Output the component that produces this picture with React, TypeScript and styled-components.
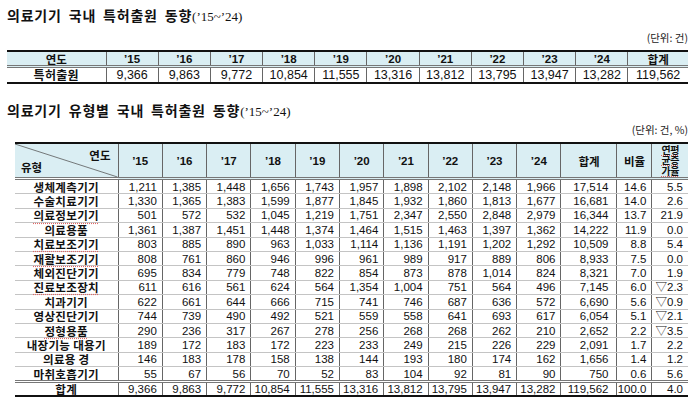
import React from 'react';
import styled, { createGlobalStyle } from 'styled-components';

const GlobalStyle = createGlobalStyle`
  html, body {
    margin: 0;
    padding: 0;
    background: #ffffff;
  }
`;

const headBg = '#daeef3';
const kfont = `"Noto Sans CJK KR", "Noto Sans", sans-serif`;
const nfont = `"Liberation Sans", "Noto Sans CJK KR", sans-serif`;

const Page = styled.div`
  width: 700px;
  height: 402px;
  overflow: hidden;
  box-sizing: border-box;
  padding: 0 12px 0 7px;
  font-family: ${kfont};
  color: #111;
`;

const Title = styled.h2<{ $top: number }>`
  margin: ${p => p.$top}px 0 0 0;
  font-size: 14px;
  line-height: 20px;
  font-weight: 700;
  letter-spacing: 0.8px;
  word-spacing: 3px;
  white-space: nowrap;
`;

const Years = styled.span`
  font-family: "Liberation Serif", "Noto Sans CJK KR", serif;
  font-size: 13px;
  font-weight: 400;
  letter-spacing: 0;
`;

const Unit = styled.div<{ $top: number }>`
  margin-top: ${p => p.$top}px;
  text-align: right;
  font-size: 10.5px;
  line-height: 14px;
  color: #222;
`;

const Table = styled.table<{ $width: number; $left: number }>`
  width: ${p => p.$width}px;
  margin: 5px 0 0 ${p => p.$left}px;
  border-collapse: collapse;
  table-layout: fixed;
  border-top: 2px solid #111;
  border-bottom: 2px solid #111;
`;

const Th = styled.th<{ $h: number }>`
  height: ${p => p.$h}px;
  padding: 0;
  background: ${headBg};
  font-family: ${nfont};
  font-size: 11.5px;
  line-height: 12px;
  font-weight: 700;
  text-align: center;
  border-left: 1px solid #666;
  border-bottom: 3px double #777;
  &:first-child {
    border-left: none;
  }
`;

const HanTh = styled(Th)`
  font-family: ${kfont};
`;

const Td = styled.td<{ $h: number; $align?: string; $pad?: number; $size?: number }>`
  height: ${p => p.$h}px;
  padding: 0 ${p => p.$pad ?? 0}px 0 0;
  font-family: ${nfont};
  font-size: ${p => p.$size ?? 11.5}px;
  line-height: 12px;
  text-align: ${p => p.$align ?? 'right'};
  border-left: 1px solid #666;
  border-bottom: 1px solid #c4c4c4;
  white-space: nowrap;
  overflow: hidden;
`;

const Label = styled.td<{ $h: number; $size?: number }>`
  height: ${p => p.$h}px;
  padding: 0;
  font-size: ${p => p.$size ?? 11.5}px;
  line-height: 12px;
  font-weight: 700;
  text-align: center;
  letter-spacing: 0.3px;
  border-bottom: 1px solid #c4c4c4;
  white-space: nowrap;
`;

const TotalRow = styled.tr`
  td {
    border-top: 3px double #777;
    border-bottom: none;
  }
`;

const Squiggle = styled.span`
  text-decoration: underline dotted #e06666;
  text-underline-offset: 2px;
`;

const DiagCell = styled.th`
  position: relative;
  height: 33px;
  padding: 0;
  background: ${headBg};
  border-bottom: 3px double #777;
  font-size: 11.5px;
  font-weight: 700;
`;

const DiagLine = styled.svg`
  position: absolute;
  inset: 0;
  width: 100%;
  height: 100%;
`;

const CornerTop = styled.span`
  position: absolute;
  right: 7px;
  top: 4px;
  line-height: 14px;
`;

const CornerBottom = styled.span`
  position: absolute;
  left: 6px;
  bottom: 3px;
  line-height: 14px;
`;

const Stacked = styled.span`
  display: block;
  font-size: 10px;
  line-height: 10.5px;
  letter-spacing: -0.5px;
  text-decoration: underline dotted #e06666;
`;

const summaryYears = ['’15', '’16', '’17', '’18', '’19', '’20', '’21', '’22', '’23', '’24'];
const summaryValues = ['9,366', '9,863', '9,772', '10,854', '11,555', '13,316', '13,812', '13,795', '13,947', '13,282', '119,562'];

type Row = { name: string; squiggle?: boolean; values: string[] };

const rows: Row[] = [
  { name: '생체계측기기', values: ['1,211', '1,385', '1,448', '1,656', '1,743', '1,957', '1,898', '2,102', '2,148', '1,966', '17,514', '14.6', '5.5'] },
  { name: '수술치료기기', values: ['1,330', '1,365', '1,383', '1,599', '1,877', '1,845', '1,932', '1,860', '1,813', '1,677', '16,681', '14.0', '2.6'] },
  { name: '의료정보기기', squiggle: true, values: ['501', '572', '532', '1,045', '1,219', '1,751', '2,347', '2,550', '2,848', '2,979', '16,344', '13.7', '21.9'] },
  { name: '의료용품', values: ['1,361', '1,387', '1,451', '1,448', '1,374', '1,464', '1,515', '1,463', '1,397', '1,362', '14,222', '11.9', '0.0'] },
  { name: '치료보조기기', squiggle: true, values: ['803', '885', '890', '963', '1,033', '1,114', '1,136', '1,191', '1,202', '1,292', '10,509', '8.8', '5.4'] },
  { name: '재활보조기기', squiggle: true, values: ['808', '761', '860', '946', '996', '961', '989', '917', '889', '806', '8,933', '7.5', '0.0'] },
  { name: '체외진단기기', values: ['695', '834', '779', '748', '822', '854', '873', '878', '1,014', '824', '8,321', '7.0', '1.9'] },
  { name: '진료보조장치', squiggle: true, values: ['611', '616', '561', '624', '564', '1,354', '1,004', '751', '564', '496', '7,145', '6.0', '▽2.3'] },
  { name: '치과기기', values: ['622', '661', '644', '666', '715', '741', '746', '687', '636', '572', '6,690', '5.6', '▽0.9'] },
  { name: '영상진단기기', values: ['744', '739', '490', '492', '521', '559', '558', '641', '693', '617', '6,054', '5.1', '▽2.1'] },
  { name: '정형용품', squiggle: true, values: ['290', '236', '317', '267', '278', '256', '268', '268', '262', '210', '2,652', '2.2', '▽3.5'] },
  { name: '내장기능 대용기', values: ['189', '172', '183', '172', '223', '233', '249', '215', '226', '229', '2,091', '1.7', '2.2'] },
  { name: '의료용 경', values: ['146', '183', '178', '158', '138', '144', '193', '180', '174', '162', '1,656', '1.4', '1.2'] },
  { name: '마취호흡기기', values: ['55', '67', '56', '70', '52', '83', '104', '92', '81', '90', '750', '0.6', '5.6'] },
];

const totals = ['9,366', '9,863', '9,772', '10,854', '11,555', '13,316', '13,812', '13,795', '13,947', '13,282', '119,562', '100.0', '4.0'];

const typeCols = [103, ...Array(10).fill(44.3), 56, 35, 36];
const padFor = (i: number) => (i === 10 ? 8 : 5);

const SummaryTable = () => (
  <Table $width={681} $left={0}>
    <colgroup>
      <col style={{ width: 99 }} />
      {summaryYears.map(y => (
        <col key={y} style={{ width: 52.2 }} />
      ))}
      <col style={{ width: 60 }} />
    </colgroup>
    <thead>
      <tr>
        <HanTh $h={13}>연도</HanTh>
        {summaryYears.map(y => (
          <Th key={y} $h={13}>{y}</Th>
        ))}
        <HanTh $h={13}>합계</HanTh>
      </tr>
    </thead>
    <tbody>
      <tr>
        <Label $h={14} $size={12}>특허출원</Label>
        {summaryValues.map((v, i) => (
          <Td key={i} $h={14} $align="center" $size={12.5}>{v}</Td>
        ))}
      </tr>
    </tbody>
  </Table>
);

const TypeTable = () => (
  <Table $width={673} $left={8}>
    <colgroup>
      {typeCols.map((w, i) => (
        <col key={i} style={{ width: w }} />
      ))}
    </colgroup>
    <thead>
      <tr>
        <DiagCell>
          <DiagLine viewBox="0 0 103 35" preserveAspectRatio="none">
            <line x1="0" y1="0" x2="103" y2="35" stroke="#555" strokeWidth="0.8" />
          </DiagLine>
          <CornerTop>연도</CornerTop>
          <CornerBottom>유형</CornerBottom>
        </DiagCell>
        {summaryYears.map(y => (
          <Th key={y} $h={33}>{y}</Th>
        ))}
        <HanTh $h={33}>합계</HanTh>
        <HanTh $h={33}>비율</HanTh>
        <HanTh $h={33}>
          <Stacked>연평</Stacked>
          <Stacked>균증</Stacked>
          <Stacked>가율</Stacked>
        </HanTh>
      </tr>
    </thead>
    <tbody>
      {rows.map(r => (
        <tr key={r.name}>
          <Label $h={13.4}>{r.squiggle ? <Squiggle>{r.name}</Squiggle> : r.name}</Label>
          {r.values.map((v, i) => (
            <Td key={i} $h={13.4} $pad={padFor(i)}>{v}</Td>
          ))}
        </tr>
      ))}
      <TotalRow>
        <Label $h={12}>합계</Label>
        {totals.map((v, i) => (
          <Td key={i} $h={12} $pad={padFor(i)}>{v}</Td>
        ))}
      </TotalRow>
    </tbody>
  </Table>
);

export default function App() {
  return (
    <>
      <GlobalStyle />
      <Page>
        <Title $top={5}>
          의료기기 국내 특허출원 동향<Years>(’15~’24)</Years>
        </Title>
        <Unit $top={4}>(단위: 건)</Unit>
        <SummaryTable />
        <Title $top={16}>
          의료기기 유형별 국내 특허출원 동향<Years>(’15~’24)</Years>
        </Title>
        <Unit $top={1}>(단위: 건, %)</Unit>
        <TypeTable />
      </Page>
    </>
  );
}
